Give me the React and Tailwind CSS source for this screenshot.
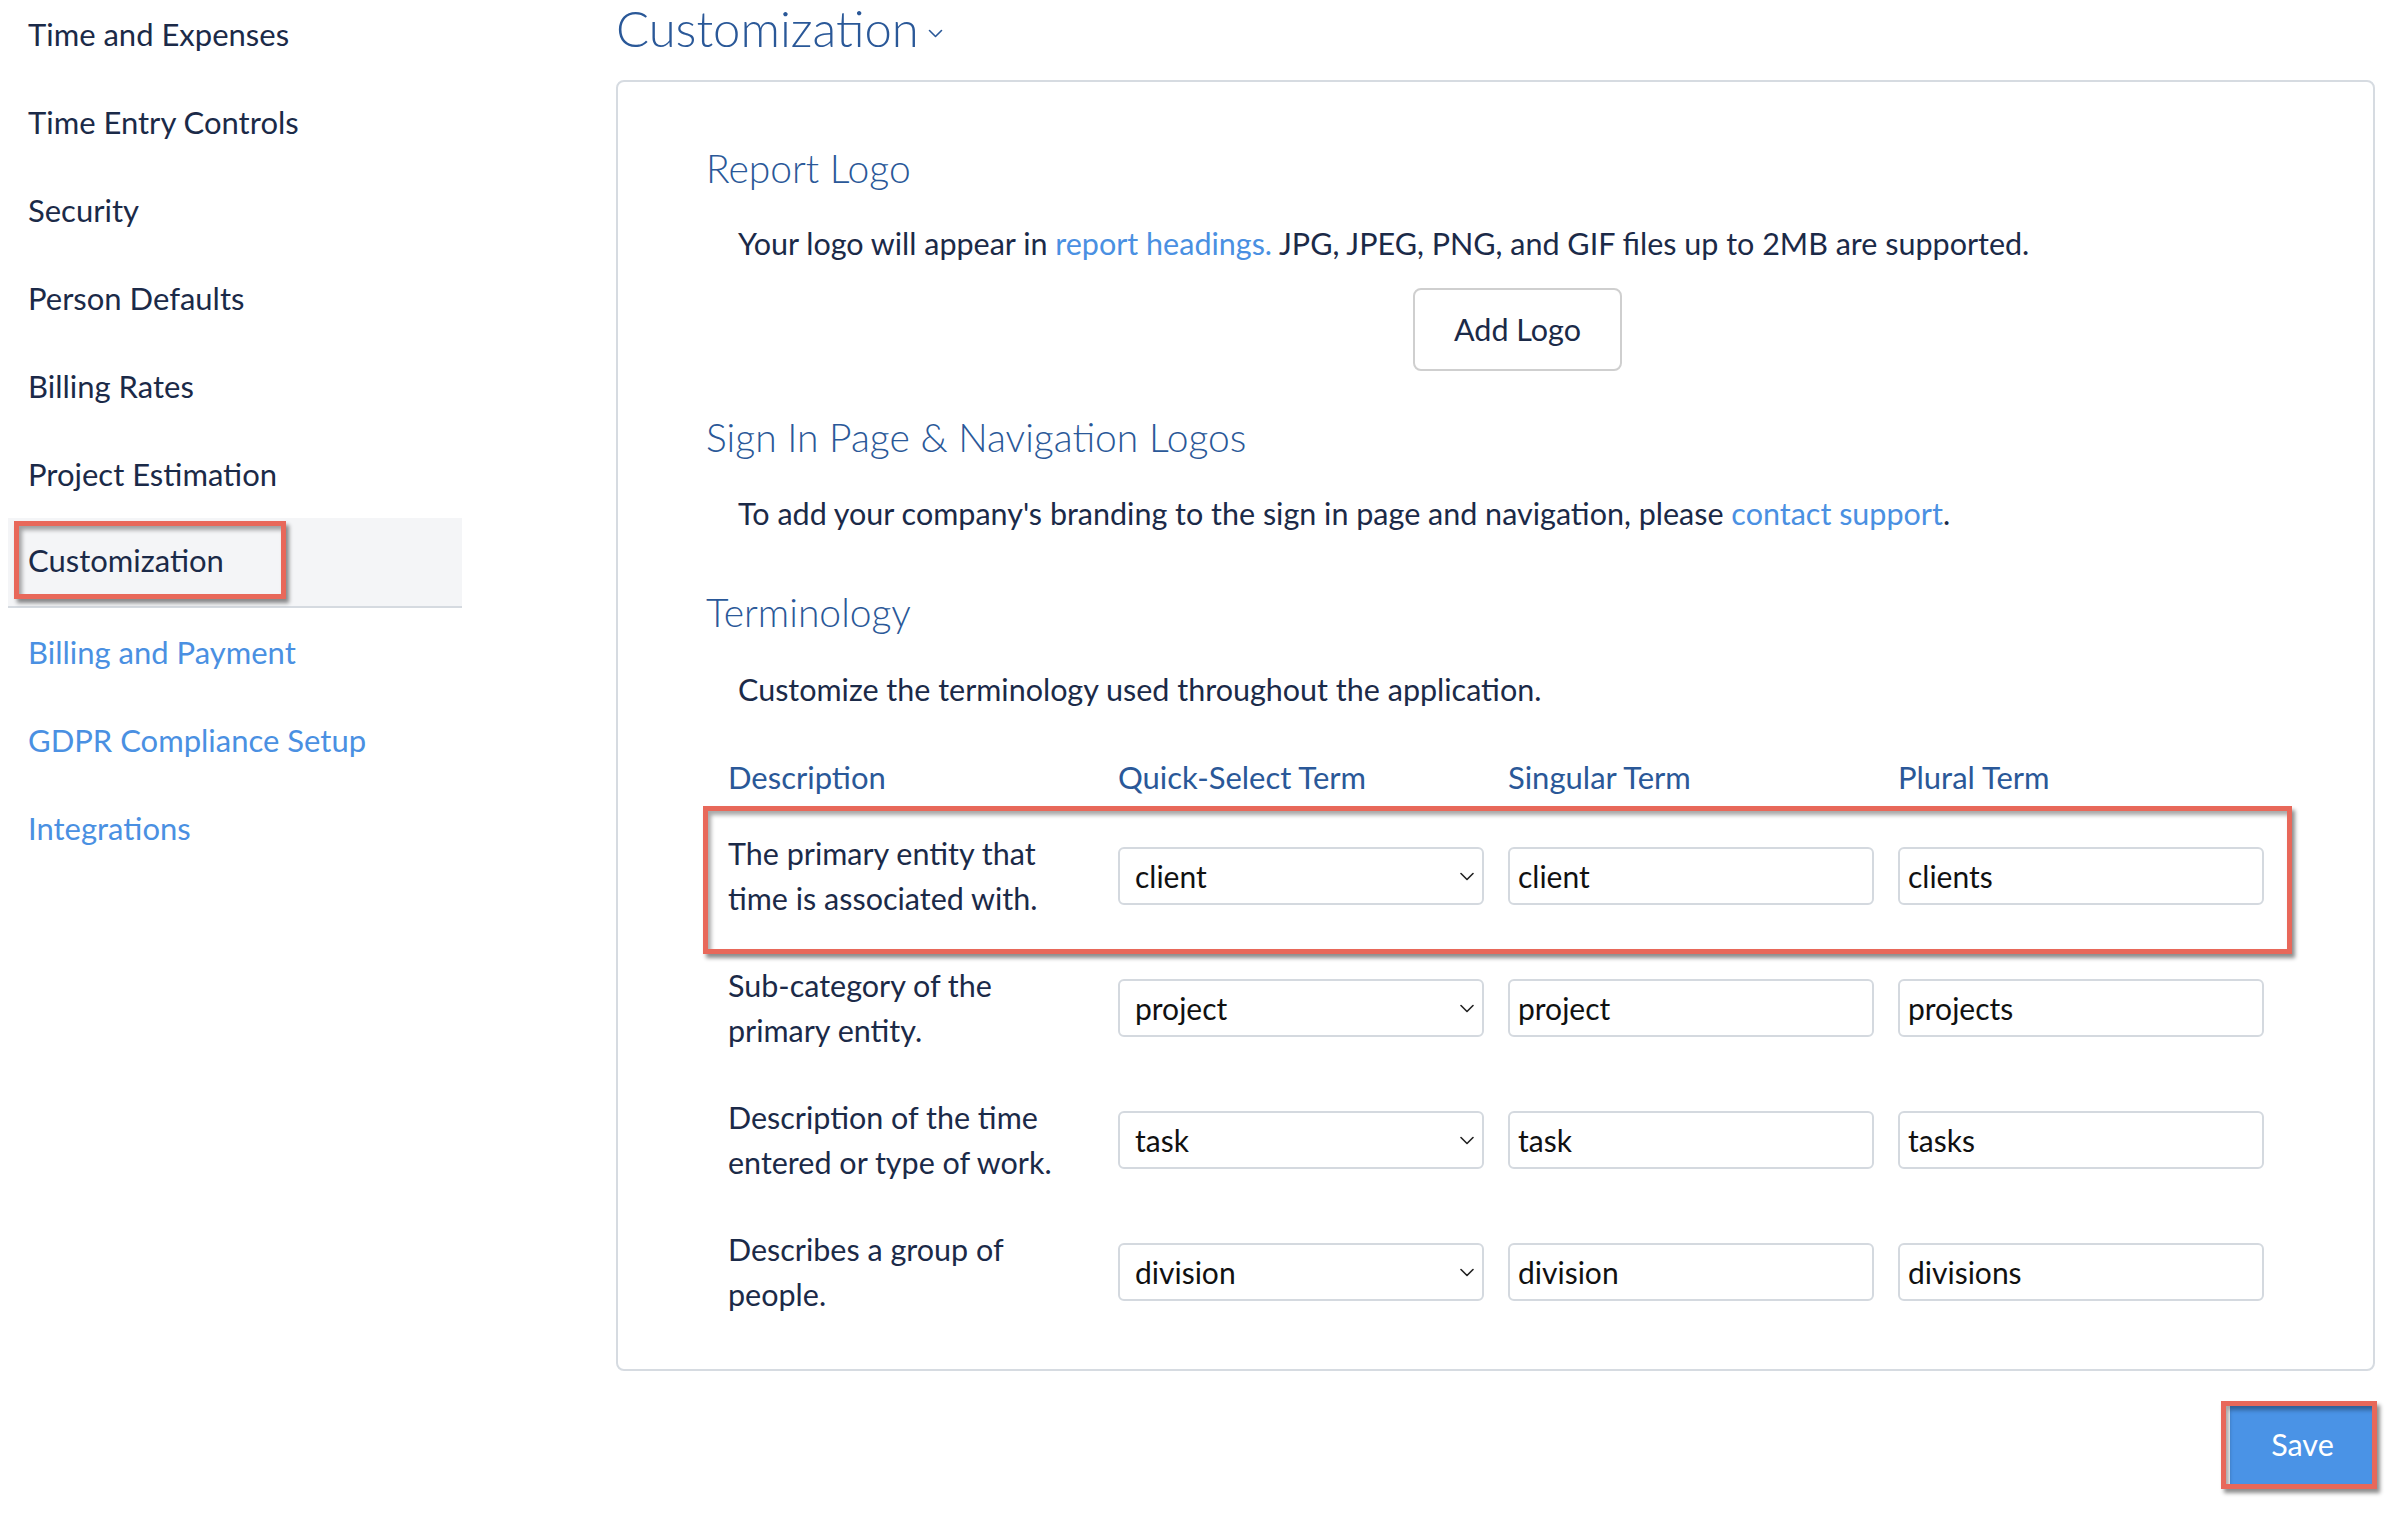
import React from 'react';

const NAV_TOP = [
  'Time and Expenses',
  'Time Entry Controls',
  'Security',
  'Person Defaults',
  'Billing Rates',
  'Project Estimation',
];

const NAV_LINKS = ['Billing and Payment', 'GDPR Compliance Setup', 'Integrations'];

const TERMS = [
  { desc: 'The primary entity that time is associated with.', quick: 'client', singular: 'client', plural: 'clients', marked: true },
  { desc: 'Sub-category of the primary entity.', quick: 'project', singular: 'project', plural: 'projects' },
  { desc: 'Description of the time entered or type of work.', quick: 'task', singular: 'task', plural: 'tasks' },
  { desc: 'Describes a group of people.', quick: 'division', singular: 'division', plural: 'divisions' },
];

const MARK =
  'pointer-events-none absolute border-[5px] border-[#e8685a] shadow-[3px_4px_4px_rgba(0,0,0,0.45),inset_3px_4px_4px_rgba(0,0,0,0.35)]';

function Chevron({ className }) {
  return (
    <svg className={className} viewBox="0 0 14 9" fill="none" stroke="currentColor" strokeWidth="1.6" strokeLinecap="round" strokeLinejoin="round">
      <path d="M1 1.5 L7 7.5 L13 1.5" />
    </svg>
  );
}

function SelectBox({ value }) {
  return (
    <div className="relative h-[58px] w-[366px]">
      <select
        defaultValue={value}
        className="h-full w-full appearance-none rounded-[6px] border-2 border-[#d4d9df] bg-white pl-[15px] pr-[40px] text-[30px] text-[#111111] outline-none"
      >
        <option value={value}>{value}</option>
      </select>
      <Chevron className="pointer-events-none absolute right-[10px] top-[25px] h-[9px] w-[14px] text-[#222222]" />
    </div>
  );
}

function TextBox({ value }) {
  return (
    <input
      defaultValue={value}
      className="h-[58px] w-[366px] rounded-[6px] border-2 border-[#d4d9df] bg-white px-[8px] text-[30px] text-[#111111] outline-none"
    />
  );
}

export default function App() {
  return (
    <div className="flex h-[1514px] w-full overflow-hidden bg-white font-['Lato',sans-serif] text-[#1b2a48]">
      {/* settings navigation */}
      <aside className="w-[616px] shrink-0">
        <nav className="-mt-[10px] ml-[8px] w-[454px] text-[31px]">
          {NAV_TOP.map((label) => (
            <div key={label} className="flex h-[88px] items-center pl-[20px]">
              {label}
            </div>
          ))}
          <div className="h-[90px] border-b-2 border-[#d5dae0] bg-[#f4f5f7] pl-[6px] pt-[3px]">
            <div className="flex h-[78px] w-[272px] items-center border-[5px] border-[#e8685a] pl-[9px] shadow-[3px_4px_4px_rgba(0,0,0,0.45),inset_3px_4px_4px_rgba(0,0,0,0.35)]">
              Customization
            </div>
          </div>
          {NAV_LINKS.map((label) => (
            <div key={label} className="flex h-[88px] items-center pl-[20px] text-[#4a90e2]">
              {label}
            </div>
          ))}
        </nav>
      </aside>

      {/* settings page */}
      <main className="w-[1759px] shrink-0">
        <div className="flex h-[80px] items-start">
          <h1 className="flex items-center text-[49px] font-light leading-[57px] text-[#2a5898]">
            Customization
            <Chevron className="ml-[9px] mt-[10px] h-[9px] w-[15px]" />
          </h1>
        </div>

        <section className="rounded-[8px] border-2 border-[#d6dbe1] pb-[31px] pl-[88px] pt-[62px]">
          <h2 className="text-[39px] font-light leading-[48px] text-[#2a5898]">Report Logo</h2>
          <p className="mt-[29px] pl-[32px] text-[30.5px] leading-[44px]">
            Your logo will appear in <span className="text-[#4a90e2]">report headings.</span> JPG, JPEG, PNG, and GIF files up to 2MB are
            supported.
          </p>
          <button className="ml-[707px] mt-[23px] h-[83px] w-[209px] rounded-[8px] border-2 border-[#cfcfcf] bg-white text-[30.5px] text-[#1b2a48]">
            Add Logo
          </button>

          <h2 className="mt-[42px] text-[39px] font-light leading-[48px] text-[#2a5898]">Sign In Page &amp; Navigation Logos</h2>
          <p className="mt-[30px] pl-[32px] text-[30.5px] leading-[44px]">
            To add your company's branding to the sign in page and navigation, please{' '}
            <span className="text-[#4a90e2]">contact support</span>.
          </p>

          <h2 className="mt-[53px] text-[39px] font-light leading-[48px] text-[#2a5898]">Terminology</h2>
          <p className="mt-[31px] pl-[32px] text-[30.5px] leading-[44px]">Customize the terminology used throughout the application.</p>

          <div className="ml-[22px] mt-[44px]">
            <div className="grid h-[44px] grid-cols-[390px_390px_390px_366px] items-center text-[31px] leading-[44px] text-[#2a5898]">
              <div>Description</div>
              <div>Quick-Select Term</div>
              <div>Singular Term</div>
              <div>Plural Term</div>
            </div>
            <div className="mt-[11px]">
              {TERMS.map((t) => (
                <div key={t.quick} className="relative grid h-[132px] grid-cols-[390px_390px_390px_366px] items-center">
                  <div className="w-[340px] text-[30.5px] leading-[45px]">{t.desc}</div>
                  <SelectBox value={t.quick} />
                  <TextBox value={t.singular} />
                  <TextBox value={t.plural} />
                  {t.marked && <span className={`${MARK} -left-[25px] -top-[4px] h-[148px] w-[1589px]`} />}
                </div>
              ))}
            </div>
          </div>
        </section>

        <div className="flex justify-end">
          <div className="relative mt-[33px] h-[82px] w-[145px]">
            <button className="h-full w-full bg-[#4a93e6] text-[30.5px] text-white">Save</button>
            <span className={`${MARK} -left-[9px] -top-[3px] h-[88px] w-[156px]`} />
          </div>
        </div>
      </main>
    </div>
  );
}
